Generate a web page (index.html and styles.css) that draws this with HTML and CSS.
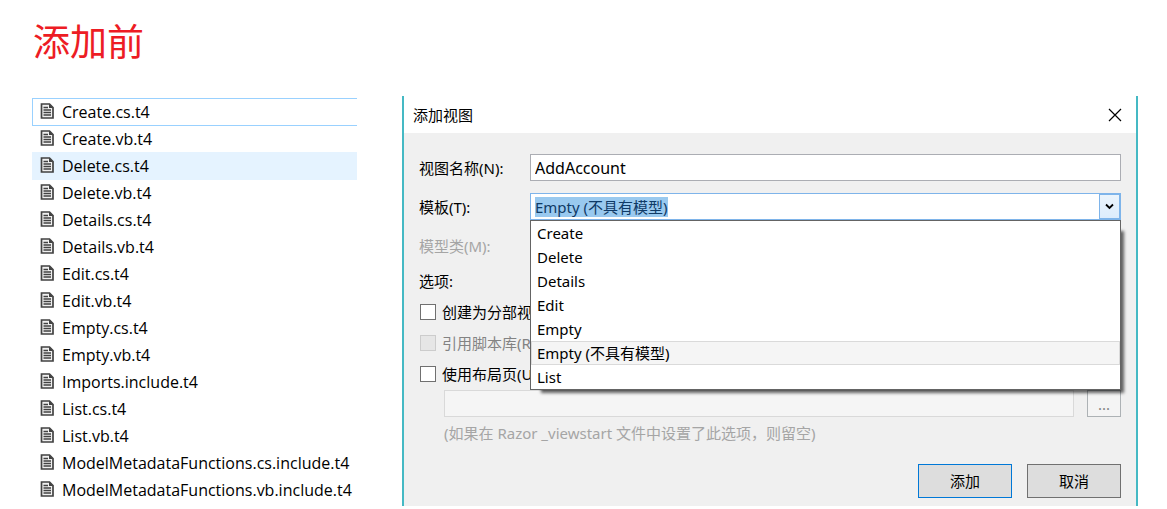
FILE: index.html
```html
<!DOCTYPE html>
<html lang="zh-CN">
<head>
<meta charset="utf-8">
<title>添加视图</title>
<link rel="stylesheet" href="styles.css">
</head>
<body>
<svg class="defs" aria-hidden="true">
  <symbol id="doc" viewBox="0 0 14 16">
    <path d="M1.500 1H9.500L13 4.500V15H1.500Z" fill="#f0f0f0" stroke="#424242" stroke-width="1.700"/>
    <path d="M9 1V5H13Z" fill="#424242"/>
    <path d="M3.500 4.500H8M3.500 7H11M3.500 9.500H11M3.500 12H11" stroke="#424242" stroke-width="1.300"/>
  </symbol>
</svg>
<main class="page">
  <h1 class="title">添加前</h1>
  <div class="columns">
    <ul class="files">
      <li class="file file-focused"><svg class="icon"><use href="#doc"/></svg>Create.cs.t4</li>
      <li class="file"><svg class="icon"><use href="#doc"/></svg>Create.vb.t4</li>
      <li class="file file-hover"><svg class="icon"><use href="#doc"/></svg>Delete.cs.t4</li>
      <li class="file"><svg class="icon"><use href="#doc"/></svg>Delete.vb.t4</li>
      <li class="file"><svg class="icon"><use href="#doc"/></svg>Details.cs.t4</li>
      <li class="file"><svg class="icon"><use href="#doc"/></svg>Details.vb.t4</li>
      <li class="file"><svg class="icon"><use href="#doc"/></svg>Edit.cs.t4</li>
      <li class="file"><svg class="icon"><use href="#doc"/></svg>Edit.vb.t4</li>
      <li class="file"><svg class="icon"><use href="#doc"/></svg>Empty.cs.t4</li>
      <li class="file"><svg class="icon"><use href="#doc"/></svg>Empty.vb.t4</li>
      <li class="file"><svg class="icon"><use href="#doc"/></svg>Imports.include.t4</li>
      <li class="file"><svg class="icon"><use href="#doc"/></svg>List.cs.t4</li>
      <li class="file"><svg class="icon"><use href="#doc"/></svg>List.vb.t4</li>
      <li class="file"><svg class="icon"><use href="#doc"/></svg>ModelMetadataFunctions.cs.include.t4</li>
      <li class="file"><svg class="icon"><use href="#doc"/></svg>ModelMetadataFunctions.vb.include.t4</li>
    </ul>
    <section class="dialog" role="dialog" aria-labelledby="dialog-title">
      <header class="titlebar">
        <h2 class="dialog-title" id="dialog-title">添加视图</h2>
        <button class="close" type="button" aria-label="关闭"><svg width="14" height="14" viewBox="0 0 14 14"><path d="M1 1L13 13M13 1L1 13" stroke="#000" stroke-width="1.200"/></svg></button>
      </header>
      <form class="form">
        <div class="field">
          <label class="label" for="view-name">视图名称(N):</label>
          <input class="textbox" id="view-name" type="text" value="AddAccount">
        </div>
        <div class="field">
          <label class="label" for="template">模板(T):</label>
          <div class="combo">
            <select class="select" id="template">
              <option>Create</option>
              <option>Delete</option>
              <option>Details</option>
              <option>Edit</option>
              <option>Empty</option>
              <option selected>Empty (不具有模型)</option>
              <option>List</option>
            </select>
            <button class="drop" type="button" aria-label="展开"><svg width="9" height="7" viewBox="0 0 9 7"><path d="M1 1.500L4.500 5L8 1.500" fill="none" stroke="#000" stroke-width="1.800"/></svg></button>
            <ul class="menu" role="listbox" aria-label="模板">
              <li class="item" role="option">Create</li>
              <li class="item" role="option">Delete</li>
              <li class="item" role="option">Details</li>
              <li class="item" role="option">Edit</li>
              <li class="item" role="option">Empty</li>
              <li class="item item-active" role="option" aria-selected="true">Empty (不具有模型)</li>
              <li class="item" role="option">List</li>
            </ul>
          </div>
        </div>
        <div class="field"><span class="label label-off">模型类(M):</span></div>
        <fieldset class="options">
          <legend class="legend">选项:</legend>
          <label class="check"><input class="box" type="checkbox"><span class="check-text">创建为分部视</span></label>
          <label class="check check-off"><input class="box" type="checkbox" disabled><span class="check-text">引用脚本库(R</span></label>
          <label class="check"><input class="box" type="checkbox"><span class="check-text">使用布局页(U</span></label>
          <div class="layout">
            <input class="textbox textbox-off" type="text" aria-label="布局页" disabled>
            <button class="browse" type="button" disabled>...</button>
          </div>
          <p class="hint">(如果在 Razor _viewstart 文件中设置了此选项，则留空)</p>
        </fieldset>
        <div class="actions">
          <button class="button button-default" type="submit">添加</button>
          <button class="button" type="button">取消</button>
        </div>
      </form>
    </section>
  </div>
</main>
</body>
</html>
```
FILE: styles.css
```css
* { box-sizing: border-box; }
body, h1, h2, ul, p, fieldset, legend { margin: 0; padding: 0; }
body {
  background: #fff;
  color: #000;
  font: 15px/20px "Noto Sans", "Noto Sans CJK SC", sans-serif;
}
button, input, select { font: inherit; color: inherit; margin: 0; padding: 0; border-radius: 0; }
ul { list-style: none; }
.defs { position: absolute; width: 0; height: 0; }

.page { padding: 16px 29px 0 32px; }
.title {
  padding-left: 1px;
  color: #ed1c24;
  font-size: 37px;
  font-weight: 400;
  line-height: 52px;
}
.columns { display: flex; align-items: flex-start; gap: 45px; padding-top: 28px; }

.files { flex: 0 0 325px; padding-top: 2px; font-family: "Open Sans", sans-serif; font-size: 16px; }
.file {
  display: flex;
  align-items: center;
  gap: 8px;
  height: 28px;
  margin-bottom: -1px;
  padding-left: 7px;
  border: 1px solid transparent;
  border-right: 0;
  white-space: nowrap;
}
.file-focused { border-color: #99d1ff; }
.file-hover { background: #e5f3ff; border-color: #e5f3ff; }
.icon { width: 14px; height: 16px; margin-bottom: 2px; }

.dialog {
  flex: 1;
  min-width: 0;
  background: #f0f0f0;
  border: solid #45b9c4;
  border-width: 0 2px;
}
.titlebar {
  display: flex;
  align-items: center;
  justify-content: space-between;
  height: 37px;
  padding: 0 14px 0 9px;
  background: #fff;
}
.dialog-title { font-size: 15px; font-weight: 400; }
.close { display: flex; background: none; border: 0; }

.form { padding: 21px 15px 8px; }
.field { display: flex; align-items: center; height: 27px; margin-bottom: 12px; }
.label { flex: 0 0 111px; white-space: nowrap; }
.label-off { color: #a5a5a5; }
.textbox {
  flex: 1;
  min-width: 0;
  height: 27px;
  padding: 0 4px;
  background: #fff;
  border: 1px solid #abadb3;
  font-size: 16px;
}
.textbox-off { background: #f5f5f5; border-color: #d9d9d9; }

.combo {
  position: relative;
  flex: 1;
  display: flex;
  align-items: center;
  justify-content: space-between;
  height: 27px;
  padding-left: 4px;
  background: #fff;
  border: 1px solid #7eb4ea;
}
.select {
  appearance: none;
  height: 20px;
  background: #99c9ef;
  border: 0;
  color: #0f3a66;
  line-height: 20px;
}
.drop {
  display: flex;
  align-items: center;
  justify-content: center;
  width: 21px;
  height: 25px;
  background: linear-gradient(#ebf4fc, #dcecfc);
  border: 1px solid #7eb4ea;
}
.menu {
  position: absolute;
  z-index: 1;
  top: 26px;
  left: -1px;
  right: -1px;
  background: #fff;
  border: 1px solid #646464;
  box-shadow: 7px 7px 3px -4px rgba(0, 0, 0, .6);
}
.item { height: 24px; padding: 0 5px; border: 1px solid transparent; line-height: 22px; }
.item-active { background: #f5f5f5; border-color: #dadada; }

.options { min-width: 0; border: 0; }
.legend { line-height: 20px; margin-bottom: 5px; }
.check { display: flex; align-items: center; gap: 6px; width: 111px; height: 31px; padding-left: 1px; }
.check-text { flex: 1; min-width: 0; overflow: hidden; white-space: nowrap; }
.check-off { color: #838383; }
.box { flex: none; appearance: none; width: 16px; height: 16px; background: #fff; border: 1px solid #707070; }
.box:disabled { background: #e6e6e6; border-color: #ccc; }
.layout { display: flex; gap: 13px; padding: 1px 0 0 25px; }
.browse { width: 34px; height: 27px; background: #f4f4f4; border: 1px solid #adb2b5; color: #838383; }
.hint { padding: 6px 0 0 25px; color: #a5a5a5; }

.actions { display: flex; justify-content: flex-end; gap: 15px; padding-top: 21px; }
.button { width: 94px; height: 34px; background: #ddd; border: 1px solid #707070; }
.button-default { border-color: #0078d7; }
```
